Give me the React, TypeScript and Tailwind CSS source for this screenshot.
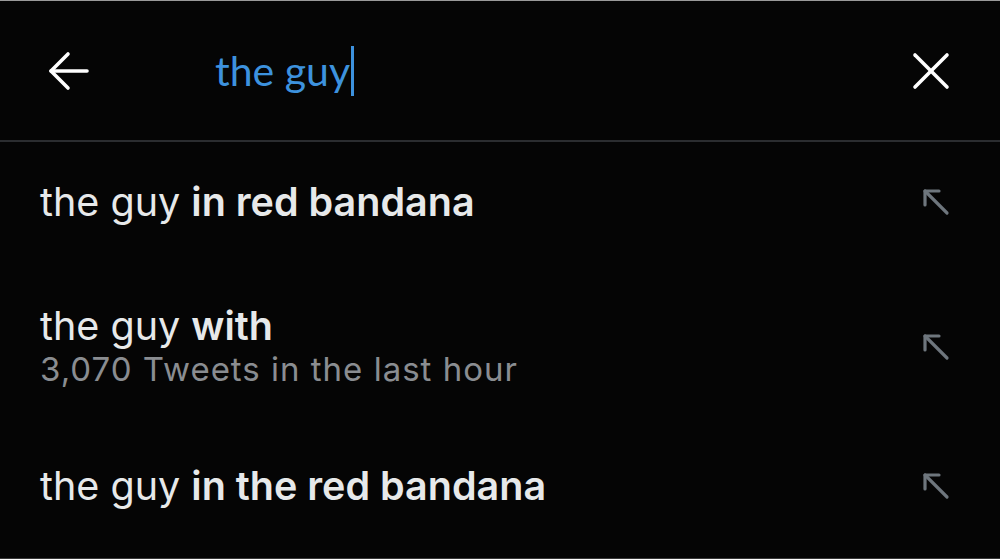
import React from "react";

const ArrowUpLeft = () => (
  <svg width="32" height="32" viewBox="0 0 32 32" fill="none" stroke="#6e767d" strokeWidth="3.2" strokeLinecap="round" strokeLinejoin="round">
    <path d="M5 5 L27 27" />
    <path d="M5 19 L5 5 L19 5" />
  </svg>
);

const Row = ({ bold, sub }: { bold: string; sub?: string }) => (
  <div className="flex items-center justify-between pl-[40px] pr-[48px]">
    <div className="flex flex-col">
      <div className="text-[39.5px] leading-[44px] text-[#e7e9ea]">
        the guy <span className="font-semibold">{bold}</span>
      </div>
      {sub && <div className="text-[33px] leading-[42px] tracking-[1px] text-[#8a8d91]">{sub}</div>}
    </div>
    <ArrowUpLeft />
  </div>
);

export default function App() {
  return (
    <div
      className="w-[1000px] h-[559px] bg-[#050505] flex flex-col border-t border-[#9a9a9a] border-b border-b-[#3a3a3a] overflow-hidden"
      style={{ fontFamily: 'Inter, "Open Sans", sans-serif' }}
    >
      <div className="h-[141px] flex items-center shrink-0 border-b-2 border-[#2b2d30]">
        <div className="w-[215px] pl-[48px] flex items-center">
          <svg width="42" height="40" viewBox="0 0 42 40" fill="none" stroke="#ffffff" strokeWidth="3.6" strokeLinecap="round" strokeLinejoin="round">
            <path d="M3 20 H39" />
            <path d="M20 3 L3 20 L20 37" />
          </svg>
        </div>
        <div className="flex-1 flex items-center">
          <span className="text-[41px] leading-none text-[#3d92de]" style={{ fontFamily: 'Lato, sans-serif' }}>the guy</span>
          <span className="w-[3px] h-[50px] bg-[#3d92de] ml-[1px]" />
        </div>
        <div className="pr-[50px]">
          <svg width="38" height="38" viewBox="0 0 38 38" fill="none" stroke="#ffffff" strokeWidth="3.6" strokeLinecap="round">
            <path d="M3 3 L35 35" />
            <path d="M35 3 L3 35" />
          </svg>
        </div>
      </div>
      <div className="flex flex-col flex-1">
        <div className="h-[120px] flex flex-col justify-center">
          <Row bold="in red bandana" />
        </div>
        <div className="h-[170px] flex flex-col justify-center">
          <Row bold="with" sub="3,070 Tweets in the last hour" />
        </div>
        <div className="flex-1 flex flex-col justify-center pb-[18px]">
          <Row bold="in the red bandana" />
        </div>
      </div>
    </div>
  );
}
